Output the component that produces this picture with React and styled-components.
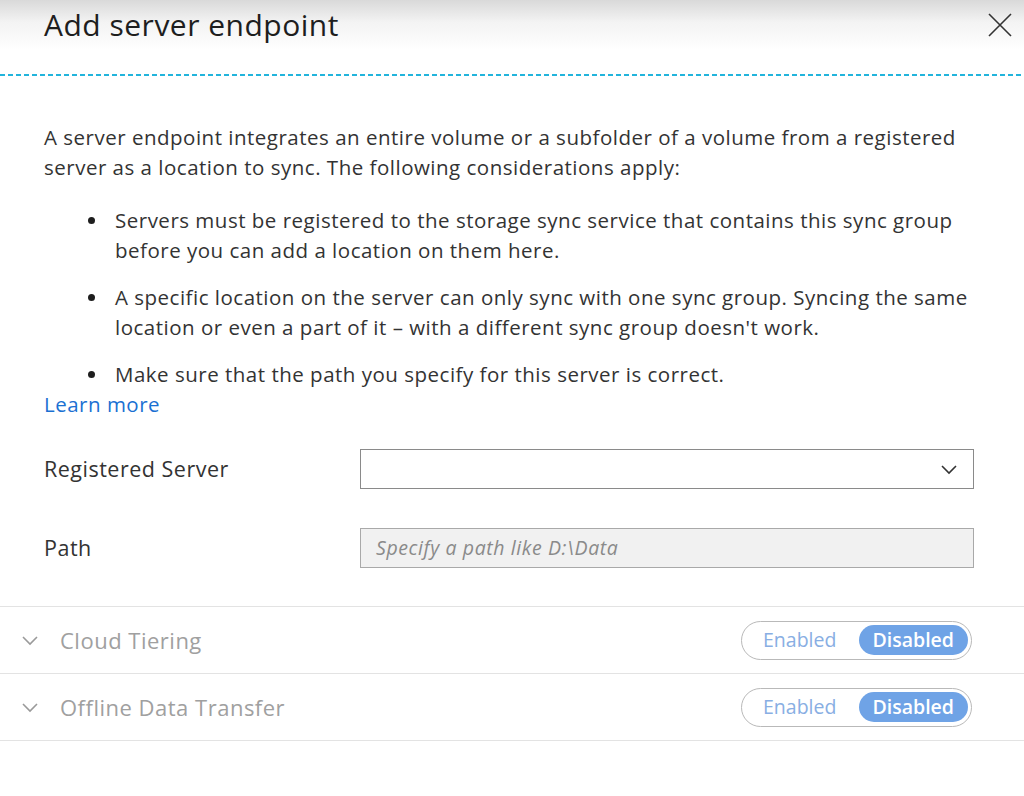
import React from 'react'
import styled, { createGlobalStyle } from 'styled-components'

const GlobalStyle = createGlobalStyle`
  html, body {
    margin: 0;
    padding: 0;
    background: #fff;
  }
  body {
    font-family: "Open Sans", "Noto Sans", sans-serif;
    color: #333;
  }
`

const Panel = styled.div`
  width: 1024px;
  height: 796px;
  overflow: hidden;
  background: #fff;
`

const Header = styled.div`
  height: 74px;
  display: flex;
  align-items: flex-start;
  justify-content: space-between;
  padding: 0 12px 0 44px;
  background: linear-gradient(to bottom, #d9d9d9 0px, #f3f3f3 22px, #fff 50px);
`

const DashedRule = styled.div`
  height: 2px;
  background: repeating-linear-gradient(to right, #22b4dc 0 5px, transparent 5px 8px);
`

const Title = styled.h1`
  margin: 5px 0 0;
  font-size: 30px;
  line-height: 40px;
  font-weight: 400;
  color: #1e1e1e;
  letter-spacing: 0.5px;
`

const CloseButton = styled.button`
  border: 0;
  background: none;
  padding: 0;
  margin-top: 13px;
  width: 24px;
  height: 24px;
  cursor: pointer;
`

const Body = styled.div`
  padding: 46px 40px 0 44px;
  font-size: 20.5px;
  letter-spacing: 0.5px;
  line-height: 30px;
`

const Intro = styled.p`
  margin: 0;
`

const List = styled.ul`
  margin: 23px 0 0;
  padding: 0 0 0 71px;
  list-style: none;

  li {
    position: relative;
    margin-bottom: 17px;
  }
  li:last-child {
    margin-bottom: 0;
  }
  li::before {
    content: '';
    position: absolute;
    left: -27px;
    top: 12px;
    width: 7px;
    height: 7px;
    border-radius: 50%;
    background: #1e1e1e;
  }
`

const LearnMore = styled.a`
  display: block;
  margin-top: 0;
  color: #1a70d2;
  text-decoration: none;
`

const Form = styled.div`
  margin-top: 30px;
  display: grid;
  grid-template-columns: 316px 614px;
  row-gap: 39px;
  align-items: center;
`

const Label = styled.label`
  font-size: 21.5px;
  letter-spacing: 0.5px;
  color: #333;
`

const Field = styled.div`
  height: 40px;
  box-sizing: border-box;
  border: 1px solid ${p => (p.$disabled ? '#a9a9a9' : '#8a8a8a')};
  background: ${p => (p.$disabled ? '#f1f1f1' : '#fff')};
  display: flex;
  align-items: center;
  justify-content: space-between;
  padding: 0 15px 0 15px;
`

const Placeholder = styled.span`
  font-style: italic;
  font-size: 19.5px;
  letter-spacing: 0.6px;
  color: #8a8a8a;
`

const Sections = styled.div`
  margin-top: 38px;
  border-top: 1px solid #e3e3e3;
`

const Row = styled.div`
  height: 66px;
  display: flex;
  align-items: center;
  justify-content: space-between;
  padding: 0 52px 0 21px;
  border-bottom: 1px solid #e3e3e3;
`

const RowTitle = styled.div`
  display: flex;
  align-items: center;
  gap: 21px;
  font-size: 22px;
  letter-spacing: 0.5px;
  color: #a0a0a0;
`

const Toggle = styled.div`
  width: 231px;
  height: 39px;
  box-sizing: border-box;
  border: 1px solid #b9b9b9;
  border-radius: 20px;
  display: flex;
  align-items: center;
  padding: 0 3px 0 21px;
  justify-content: space-between;
`

const ToggleOption = styled.span`
  font-size: 19.5px;
  line-height: 30px;
  border-radius: 15px;
  padding: 0 ${p => (p.$active ? '14px' : '0')};
  color: ${p => (p.$active ? '#fff' : '#88aee3')};
  background: ${p => (p.$active ? '#6fa3e6' : 'transparent')};
  font-weight: ${p => (p.$active ? 600 : 400)};
`

function Chevron({ size = 18, color = '#333' }) {
  return (
    <svg width={size} height={size} viewBox="0 0 18 18" fill="none">
      <path d="M2 6 L9 13 L16 6" stroke={color} strokeWidth="1.6" />
    </svg>
  )
}

function Section({ title }) {
  return (
    <Row>
      <RowTitle>
        <Chevron size={18} color="#9a9a9a" />
        {title}
      </RowTitle>
      <Toggle>
        <ToggleOption>Enabled</ToggleOption>
        <ToggleOption $active>Disabled</ToggleOption>
      </Toggle>
    </Row>
  )
}

export default function App() {
  return (
    <Panel>
      <GlobalStyle />
      <Header>
        <Title>Add server endpoint</Title>
        <CloseButton aria-label="Close">
          <svg width="24" height="24" viewBox="0 0 24 24">
            <path d="M1 1 L23 23 M23 1 L1 23" stroke="#333" strokeWidth="1.6" />
          </svg>
        </CloseButton>
      </Header>
      <DashedRule />
      <Body>
        <Intro>
          A server endpoint integrates an entire volume or a subfolder of a volume from a registered
          <br />
          server as a location to sync. The following considerations apply:
        </Intro>
        <List>
          <li>
            Servers must be registered to the storage sync service that contains this sync group
            <br />
            before you can add a location on them here.
          </li>
          <li>
            A specific location on the server can only sync with one sync group. Syncing the same
            <br />
            location or even a part of it – with a different sync group doesn't work.
          </li>
          <li>Make sure that the path you specify for this server is correct.</li>
        </List>
        <LearnMore href="#">Learn more</LearnMore>
        <Form>
          <Label>Registered Server</Label>
          <Field>
            <span />
            <Chevron size={18} color="#333" />
          </Field>
          <Label>Path</Label>
          <Field $disabled>
            <Placeholder>Specify a path like D:\Data</Placeholder>
          </Field>
        </Form>
      </Body>
      <Sections>
        <Section title="Cloud Tiering" />
        <Section title="Offline Data Transfer" />
      </Sections>
    </Panel>
  )
}
